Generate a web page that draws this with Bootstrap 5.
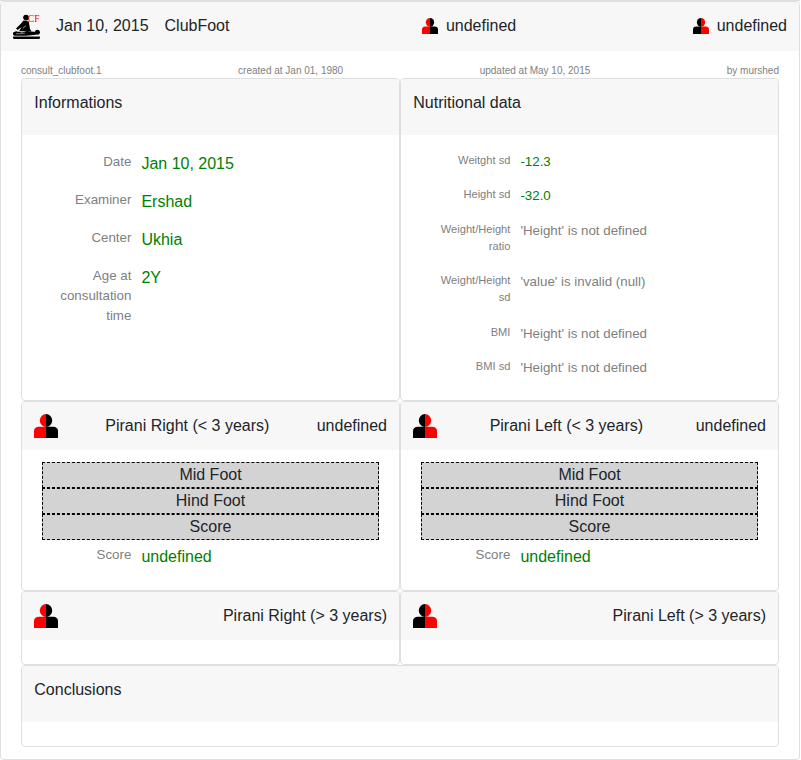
<!DOCTYPE html>
<html lang="en">
<head>
<meta charset="utf-8">
<meta name="viewport" content="width=device-width, initial-scale=1">
<title>ClubFoot consultation</title>
<link href="https://cdn.jsdelivr.net/npm/bootstrap@5.3.0/dist/css/bootstrap.min.css" rel="stylesheet">
<style>
body { font-family: "Liberation Sans", Arial, sans-serif; font-size: 16px; line-height: 1.5; color: #212529; }
.page { width: 800px; height: 760px; }
.previous-end { height: 1px; background: #dfdfdf; }
.card { --bs-card-border-color: #dfdfdf; --bs-card-border-radius: 4px; --bs-card-inner-border-radius: 3px; --bs-card-cap-bg: #f7f7f7; border-radius: 4px; }
.card-header { padding: 12px; border-bottom: 0; }
.consult > .card-header { height: 49px; }
.consult > .card-body { padding: 12px 20px; }
.panel > .tall-header { height: 56px; padding-left: 12.3px; }
.panel > .card-body { padding: 12px 20px 8px; }
.panel > .blank { padding: 0; height: 24px; flex: none; }
.meta { font-size: 10px; line-height: 15px; color: gray; }
.half { width: 50%; }
.field { display: flex; gap: 10px; }
.fields { padding-top: 4.6px; margin-bottom: -2px; }
.field-label { width: 89.4px; padding-left: 12px; flex: none; text-align: right; font-size: .83333em; padding-bottom: 18px; color: gray; }
.field-value { color: green; }
.compact { font-size: 13.333px; }
.field-value.failed { color: gray; }
.group-title { border: 1px dashed #000; background: #d3d3d3; text-align: center; height: 26px; }
.first-row { height: 323px; }
.second-row { height: 190px; }
svg { display: block; flex: none; }
.logo-text { font-family: "Liberation Serif", serif; font-size: 10px; fill: red; }
</style>
</head>
<body>
<svg width="0" height="0" class="position-absolute" aria-hidden="true">
  <defs>
    <clipPath id="leftHalf"><path d="M0 0H12V24H0z"/></clipPath>
    <clipPath id="rightHalf"><path d="M12 0H24V24H12z"/></clipPath>
    <symbol id="person" viewBox="0 0 24 24"><ellipse cx="12" cy="6.5" rx="6.2" ry="6.5"/><path d="M0 24V17C0 14.4 1.8 12.8 5 12.8H19C22.2 12.8 24 14.4 24 17V24z"/></symbol>
    <symbol id="personRight" viewBox="0 0 24 24"><use href="#person" width="24" height="24" fill="red" clip-path="url(#leftHalf)"/><use href="#person" width="24" height="24" fill="#000" clip-path="url(#rightHalf)"/></symbol>
    <symbol id="personLeft" viewBox="0 0 24 24"><use href="#person" width="24" height="24" fill="#000" clip-path="url(#leftHalf)"/><use href="#person" width="24" height="24" fill="red" clip-path="url(#rightHalf)"/></symbol>
  </defs>
</svg>
<div class="page d-flex flex-column">
  <div class="previous-end"></div>
  <div class="card consult flex-grow-1">
    <div class="card-header d-flex justify-content-between">
      <div class="d-flex gap-3 pe-3">
        <svg width="27" height="26" viewBox="0 0 27 26">
          <circle cx="13" cy="3.6" r="2.8"/>
          <path d="M10.5 6.6L15.8 7.6L17 15L18.5 17.3H6L8.6 13.2L4.6 16L3 14.4L7.6 10z"/>
          <path d="M9.8 14.4L13 11.6" stroke="#f7f7f7" stroke-width=".6"/>
          <path d="M0 18.5L3 17.3L9 18.4L14 17L23 18V20.8L13 21.8H1.5L0 20.8z"/>
          <path d="M3 19.7H9L12 19" fill="none" stroke="#f7f7f7" stroke-width=".5"/>
          <circle cx="24.4" cy="18.3" r="2.5"/>
          <path d="M0 22.5H27V24.2L26 25H1L0 24.2z"/>
          <text class="logo-text" x="14.8" y="7.9" textLength="11.8" lengthAdjust="spacingAndGlyphs">CF</text>
        </svg>
        <span>Jan 10, 2015</span>
        <span>ClubFoot</span>
      </div>
      <div class="d-flex gap-2"><svg class="mt-1" width="16" height="16"><use href="#personRight"/></svg><span>undefined</span></div>
      <div class="d-flex gap-2"><svg class="mt-1" width="16" height="16"><use href="#personLeft"/></svg><span>undefined</span></div>
    </div>
    <div class="card-body">
      <div class="meta d-flex justify-content-between">
        <span>consult_clubfoot.1</span><span>created at Jan 01, 1980</span><span>updated at May 10, 2015</span><span>by murshed</span>
      </div>
      <div class="d-flex flex-wrap">
        <section class="card panel half first-row">
          <div class="card-header tall-header">Informations</div>
          <div class="card-body"><div class="fields">
            <div class="field"><div class="field-label">Date</div><div class="field-value">Jan 10, 2015</div></div>
            <div class="field"><div class="field-label">Examiner</div><div class="field-value">Ershad</div></div>
            <div class="field"><div class="field-label">Center</div><div class="field-value">Ukhia</div></div>
            <div class="field"><div class="field-label">Age at consultation time</div><div class="field-value">2Y</div></div>
          </div></div>
        </section>
        <section class="card panel half first-row">
          <div class="card-header tall-header">Nutritional data</div>
          <div class="card-body"><div class="fields compact">
            <div class="field"><div class="field-label">Weitght sd</div><div class="field-value">-12.3</div></div>
            <div class="field"><div class="field-label">Height sd</div><div class="field-value">-32.0</div></div>
            <div class="field"><div class="field-label">Weight/Height ratio</div><div class="field-value failed">'Height' is not defined</div></div>
            <div class="field"><div class="field-label">Weight/Height sd</div><div class="field-value failed">'value' is invalid (null)</div></div>
            <div class="field"><div class="field-label">BMI</div><div class="field-value failed">'Height' is not defined</div></div>
            <div class="field"><div class="field-label">BMI sd</div><div class="field-value failed">'Height' is not defined</div></div>
          </div></div>
        </section>
        <section class="card panel half second-row">
          <div class="card-header d-flex justify-content-between"><svg width="24" height="24"><use href="#personRight"/></svg><span>Pirani Right (&lt; 3 years)</span><span>undefined</span></div>
          <div class="card-body">
            <div class="group-title">Mid Foot</div><div class="group-title">Hind Foot</div><div class="group-title">Score</div>
            <div class="fields"><div class="field"><div class="field-label">Score</div><div class="field-value">undefined</div></div></div>
          </div>
        </section>
        <section class="card panel half second-row">
          <div class="card-header d-flex justify-content-between"><svg width="24" height="24"><use href="#personLeft"/></svg><span>Pirani Left (&lt; 3 years)</span><span>undefined</span></div>
          <div class="card-body">
            <div class="group-title">Mid Foot</div><div class="group-title">Hind Foot</div><div class="group-title">Score</div>
            <div class="fields"><div class="field"><div class="field-label">Score</div><div class="field-value">undefined</div></div></div>
          </div>
        </section>
        <section class="card panel half">
          <div class="card-header d-flex justify-content-between"><svg width="24" height="24"><use href="#personRight"/></svg><span>Pirani Right (&gt; 3 years)</span></div>
          <div class="card-body blank"></div>
        </section>
        <section class="card panel half">
          <div class="card-header d-flex justify-content-between"><svg width="24" height="24"><use href="#personLeft"/></svg><span>Pirani Left (&gt; 3 years)</span></div>
          <div class="card-body blank"></div>
        </section>
        <section class="card panel w-100">
          <div class="card-header tall-header">Conclusions</div>
          <div class="card-body blank"></div>
        </section>
      </div>
    </div>
  </div>
</div>
<script src="https://cdn.jsdelivr.net/npm/bootstrap@5.3.0/dist/js/bootstrap.bundle.min.js"></script>
</body>
</html>
